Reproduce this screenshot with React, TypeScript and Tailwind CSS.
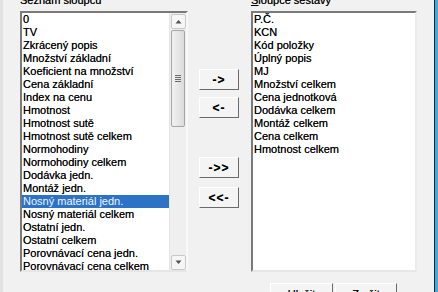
import React from "react";

const leftItems = [
  "0",
  "TV",
  "Zkrácený popis",
  "Množství základní",
  "Koeficient na množství",
  "Cena základní",
  "Index na cenu",
  "Hmotnost",
  "Hmotnost sutě",
  "Hmotnost sutě celkem",
  "Normohodiny",
  "Normohodiny celkem",
  "Dodávka jedn.",
  "Montáž jedn.",
  "Nosný materiál jedn.",
  "Nosný materiál celkem",
  "Ostatní jedn.",
  "Ostatní celkem",
  "Porovnávací cena jedn.",
  "Porovnávací cena celkem",
];

const rightItems = [
  "P.Č.",
  "KCN",
  "Kód položky",
  "Úplný popis",
  "MJ",
  "Množství celkem",
  "Cena jednotková",
  "Dodávka celkem",
  "Montáž celkem",
  "Cena celkem",
  "Hmotnost celkem",
];

function MoveButton({ label }: { label: string }) {
  return (
    <div className="w-[40px] h-[21px] border border-t-white border-l-white border-r-[#6a6a6a] border-b-[#6a6a6a] bg-[#f4f4f4] flex items-center justify-center">
      <span className="text-[12px] font-bold leading-none text-black tracking-[1px]">{label}</span>
    </div>
  );
}

function ScrollArrow({ up }: { up: boolean }) {
  return (
    <div className="w-[17px] h-[16px] flex items-center justify-center">
      <div className="w-[15px] h-[15px] border border-[#c8c8c8] bg-[#f6f6f6] rounded-[2px] flex items-center justify-center">
        <svg width="7" height="5" viewBox="0 0 7 5">
          {up ? (
            <path d="M0.5 4.5 L3.5 1 L6.5 4.5 Z" fill="#505050" />
          ) : (
            <path d="M0.5 0.5 L3.5 4 L6.5 0.5 Z" fill="#505050" />
          )}
        </svg>
      </div>
    </div>
  );
}

export default function App() {
  return (
    <div
      className="w-[438px] h-[292px] overflow-hidden bg-[#f1f1f1] flex text-black [text-shadow:0_0_0.6px_rgba(0,0,0,0.75)]"
      style={{ fontFamily: '"Liberation Sans", Arial, sans-serif' }}
    >
      <div className="flex-1 flex flex-col border-l-[3px] border-l-[#e2e2e2]">
        <div className="flex pl-[17px]">
          {/* Left column */}
          <div className="w-[168px] flex flex-col">
            <div className="h-[11px]">
              <div className="mt-[-6px] text-[11px] leading-[13px]">Seznam sloupců</div>
            </div>
            <div className="h-[261px] border-2 border-t-[#7a7a7a] border-l-[#7a7a7a] border-r-[#f8f8f8] border-b-[#e6e6e6] bg-white flex">
              <div className="flex-1 flex flex-col text-[11px] leading-[13px]">
                {leftItems.map((t, i) => (
                  <div
                    key={t}
                    className={
                      i === 14
                        ? "h-[13px] pl-[1px] bg-[#2c73c6] text-[#eef4fb] whitespace-nowrap [text-shadow:none]"
                        : "h-[13px] pl-[1px] whitespace-nowrap"
                    }
                  >
                    {t}
                  </div>
                ))}
              </div>
              <div className="w-[17px] bg-[#efefef] border-l border-[#e4e4e4] flex flex-col">
                <ScrollArrow up />
                <div className="mt-[1px] h-[97px] mx-[1px] border border-[#a4a4a4] rounded-[2px] bg-gradient-to-r from-[#f2f2f2] to-[#dcdcdc] flex flex-col items-center justify-center gap-[1px]">
                  <div className="w-[6px] h-[1px] bg-[#6a6a6a]" />
                  <div className="w-[6px] h-[1px] bg-[#6a6a6a]" />
                  <div className="w-[6px] h-[1px] bg-[#6a6a6a]" />
                  <div className="w-[6px] h-[1px] bg-[#6a6a6a]" />
                </div>
                <div className="flex-1" />
                <ScrollArrow up={false} />
              </div>
            </div>
          </div>

          {/* Middle column */}
          <div className="w-[63px] flex flex-col pl-[11px] pt-[69px]">
            <MoveButton label="->" />
            <div className="h-[7px]" />
            <MoveButton label="<-" />
            <div className="h-[39px]" />
            <MoveButton label="->>" />
            <div className="h-[9px]" />
            <MoveButton label="<<-" />
          </div>

          {/* Right column */}
          <div className="w-[166px] flex flex-col">
            <div className="h-[11px]">
              <div className="mt-[-6px] text-[11px] leading-[13px]">
                <span className="underline">S</span>loupce sestavy
              </div>
            </div>
            <div className="h-[261px] border-2 border-t-[#7a7a7a] border-l-[#7a7a7a] border-r-[#ececec] border-b-[#e6e6e6] bg-white flex flex-col text-[11px] leading-[13px]">
              {rightItems.map((t) => (
                <div key={t} className="h-[13px] pl-[1px] whitespace-nowrap">
                  {t}
                </div>
              ))}
            </div>
          </div>
        </div>

        {/* Bottom buttons */}
        <div className="flex pl-[267px] mt-[11px] gap-[2px]">
          <div className="w-[63px] h-[23px] border border-t-white border-l-white border-r-[#6a6a6a] border-b-[#6a6a6a] bg-[#f4f4f4] flex justify-center pt-[4px] text-[11px] leading-[13px]">
            Uložit
          </div>
          <div className="w-[62px] h-[23px] border border-t-white border-l-white border-r-[#6a6a6a] border-b-[#6a6a6a] bg-[#f4f4f4] flex justify-center pt-[4px] text-[11px] leading-[13px]">
            Zrušit
          </div>
        </div>
      </div>

      {/* Window frame edge */}
      <div className="w-[4px] h-full border-l border-[#0f2a38] bg-[#4fa6c8]" />
    </div>
  );
}
